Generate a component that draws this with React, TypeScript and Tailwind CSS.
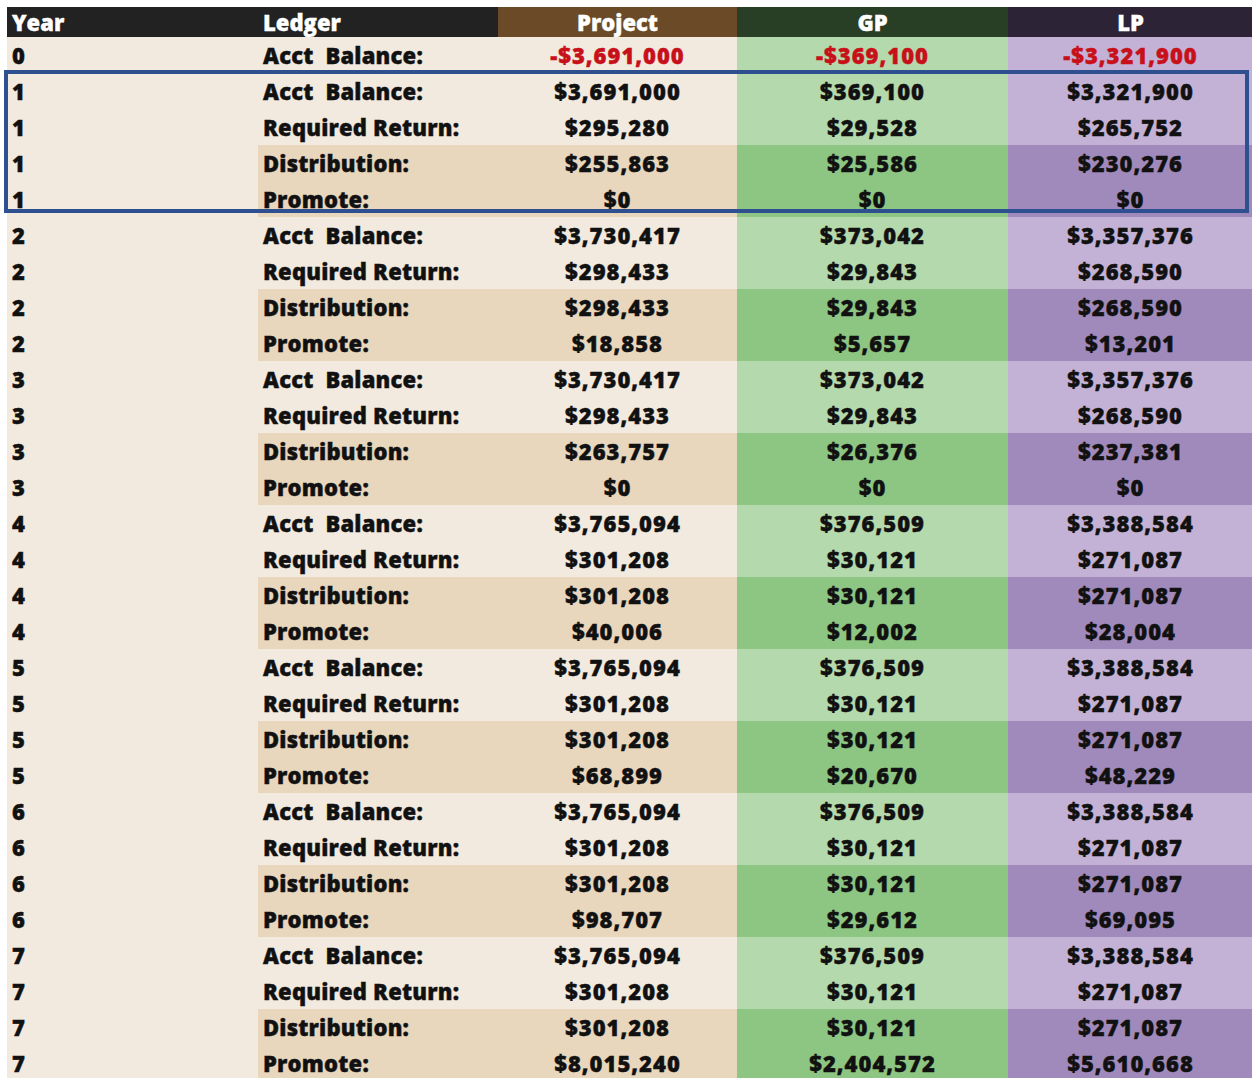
import React from "react";

type Row = {
  year: number;
  label: string;
  project: string;
  gp: string;
  lp: string;
  dark?: boolean;
  neg?: boolean;
};

const blocks: [number, string[], string[], string[]][] = [
  [1, ["$3,691,000", "$295,280", "$255,863", "$0"], ["$369,100", "$29,528", "$25,586", "$0"], ["$3,321,900", "$265,752", "$230,276", "$0"]],
  [2, ["$3,730,417", "$298,433", "$298,433", "$18,858"], ["$373,042", "$29,843", "$29,843", "$5,657"], ["$3,357,376", "$268,590", "$268,590", "$13,201"]],
  [3, ["$3,730,417", "$298,433", "$263,757", "$0"], ["$373,042", "$29,843", "$26,376", "$0"], ["$3,357,376", "$268,590", "$237,381", "$0"]],
  [4, ["$3,765,094", "$301,208", "$301,208", "$40,006"], ["$376,509", "$30,121", "$30,121", "$12,002"], ["$3,388,584", "$271,087", "$271,087", "$28,004"]],
  [5, ["$3,765,094", "$301,208", "$301,208", "$68,899"], ["$376,509", "$30,121", "$30,121", "$20,670"], ["$3,388,584", "$271,087", "$271,087", "$48,229"]],
  [6, ["$3,765,094", "$301,208", "$301,208", "$98,707"], ["$376,509", "$30,121", "$30,121", "$29,612"], ["$3,388,584", "$271,087", "$271,087", "$69,095"]],
  [7, ["$3,765,094", "$301,208", "$301,208", "$8,015,240"], ["$376,509", "$30,121", "$30,121", "$2,404,572"], ["$3,388,584", "$271,087", "$271,087", "$5,610,668"]],
];

const labels = ["Acct\u00a0 Balance:", "Required Return:", "Distribution:", "Promote:"];

const rows: Row[] = [
  { year: 0, label: labels[0], project: "-$3,691,000", gp: "-$369,100", lp: "-$3,321,900", neg: true },
  ...blocks.flatMap(([year, p, g, l]) =>
    labels.map((label, i) => ({
      year,
      label,
      project: p[i],
      gp: g[i],
      lp: l[i],
      dark: i >= 2,
    }))
  ),
];

export default function App() {
  return (
    <div
      className="relative h-[1078px] w-[1252px] overflow-hidden bg-white pt-[7px] pl-[7px]"
      style={{ fontFamily: '"Open Sans", "DejaVu Sans", sans-serif' }}
    >
      <div className="grid grid-cols-[251px_240px_239px_271px_245px] text-[22px] font-extrabold leading-none [-webkit-text-stroke-width:0.4px]">
        <div className="flex h-[30px] items-center bg-[#222222] pl-[5px] text-white">Year</div>
        <div className="flex h-[30px] items-center bg-[#222222] pl-[5px] text-white">Ledger</div>
        <div className="flex h-[30px] items-center justify-center bg-[#6b4b27] text-white">Project</div>
        <div className="flex h-[30px] items-center justify-center bg-[#283f25] text-white">GP</div>
        <div className="flex h-[30px] items-center justify-center bg-[#2c2337] text-white">LP</div>

        {rows.map((r, idx) => {
          const num = r.neg ? "text-[#c8101a]" : "text-[#111111]";
          return (
            <React.Fragment key={idx}>
              <div className="flex h-[36px] items-center bg-[#f2e9df] pl-[5px] text-[#111111]">{r.year}</div>
              <div className={`flex h-[36px] items-center pl-[5px] tracking-[0.2px] text-[#111111] ${r.dark ? "bg-[#e8d6bd]" : "bg-[#f2e9df]"}`}>
                {r.label}
              </div>
              <div className={`flex h-[36px] items-center justify-center tracking-[1px] ${num} ${r.dark ? "bg-[#e8d6bd]" : "bg-[#f2e9df]"}`}>
                {r.project}
              </div>
              <div className={`flex h-[36px] items-center justify-center tracking-[1px] ${num} ${r.dark ? "bg-[#8dc582]" : "bg-[#b4d9ad]"}`}>
                {r.gp}
              </div>
              <div className={`flex h-[36px] items-center justify-center tracking-[1px] ${num} ${r.dark ? "bg-[#a08abb]" : "bg-[#c3b2d5]"}`}>
                {r.lp}
              </div>
            </React.Fragment>
          );
        })}
      </div>

      <div className="pointer-events-none absolute top-[70px] left-[4px] h-[143px] w-[1245px] border-[4px] border-[#2e5090]" />
    </div>
  );
}
